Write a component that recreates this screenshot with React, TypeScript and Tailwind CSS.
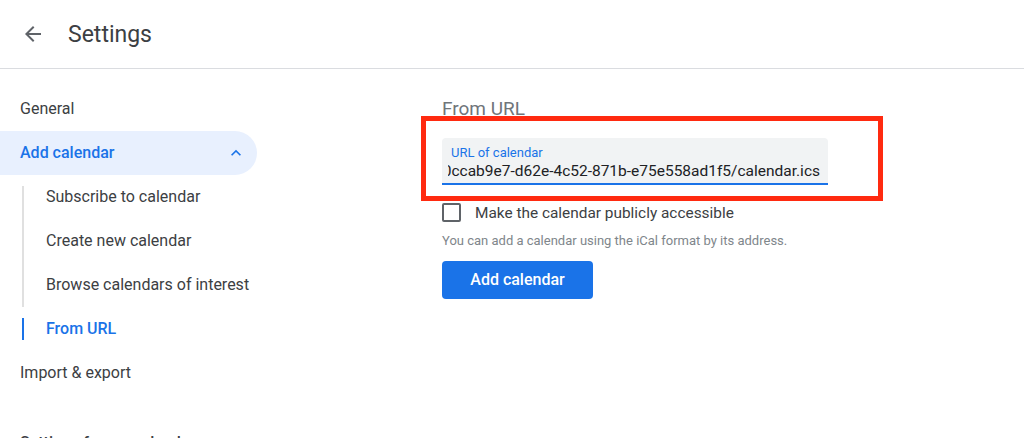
import React from "react";

const subItems = [
  { label: "Subscribe to calendar", active: false },
  { label: "Create new calendar", active: false },
  { label: "Browse calendars of interest", active: false },
  { label: "From URL", active: true },
];

function BackArrow() {
  return (
    <svg width="24" height="24" viewBox="0 0 24 24" fill="#5f6368">
      <path d="M20 11H7.83l5.59-5.59L12 4l-8 8 8 8 1.41-1.41L7.83 13H20v-2z" />
    </svg>
  );
}

function ChevronUp() {
  return (
    <svg width="20" height="20" viewBox="0 0 24 24" fill="#1a73e8">
      <path d="M7.41 15.41 12 10.83l4.59 4.58L18 14l-6-6-6 6z" />
    </svg>
  );
}

export default function App() {
  return (
    <div className="w-[1024px] h-[438px] overflow-hidden bg-white font-['Roboto',sans-serif] text-[#3c4043]">
      {/* top bar */}
      <header className="h-[69px] flex items-center border-b border-[#dadce0]">
        <div className="pl-[21px] pr-[23px] flex items-center">
          <BackArrow />
        </div>
        <h1 className="text-[23px] leading-none text-[#3c4043]">Settings</h1>
      </header>

      <div className="flex">
        {/* sidebar */}
        <nav className="w-[257px] shrink-0 pt-[18px] text-[16px]">
          <div className="h-[44px] flex items-center pl-5">General</div>
          <div className="h-[44px] flex items-center justify-between pl-5 pr-[11px] rounded-r-full bg-[#e8f0fe] text-[#1a73e8] font-medium">
            <span>Add calendar</span>
            <ChevronUp />
          </div>
          <ul className="pl-[22px]">
            {subItems.map((item, index) => (
              <li key={index} className="h-[44px] flex">
                {item.active ? (
                  <div className="w-[2px] h-[22px] self-center bg-[#1a73e8]" />
                ) : (
                  <div
                    className={
                      index === 0
                        ? "w-[2px] mt-[11px] bg-[#e0e0e0]"
                        : "w-[2px] bg-[#e0e0e0]"
                    }
                  />
                )}
                <span
                  className={
                    item.active
                      ? "pl-[22px] self-center text-[#1a73e8] font-medium"
                      : "pl-[22px] self-center"
                  }
                >
                  {item.label}
                </span>
              </li>
            ))}
          </ul>
          <div className="h-[44px] flex items-center pl-5">Import &amp; export</div>
          <div className="mt-[38px] pl-5 font-medium leading-[20px]">Settings for my calendars</div>
        </nav>

        {/* main */}
        <main className="pl-[185px] pt-[28px]">
          <h2 className="text-[19px] leading-[24px] text-[#70757a]">From URL</h2>
          <div className="ml-[-21px] mt-[-5px] w-[462px] border-[5px] border-[#ff2a10] pt-[17px] pl-4 pb-[11px]">
            <div className="w-[386px] h-[47px] bg-[#f1f3f4] rounded-t-[4px] border-b-2 border-[#1a73e8] pt-[7px]">
              <div className="pl-[9px] text-[13px] leading-[16px] text-[#1a73e8]">URL of calendar</div>
              <div className="ml-[6px] mr-2 flex justify-end overflow-hidden whitespace-nowrap text-[15.5px] leading-[20px] text-[#202124]">
                https://example.com/calendars/0ccab9e7-d62e-4c52-871b-e75e558ad1f5/calendar.ics
              </div>
            </div>
          </div>
          <label className="mt-[2px] flex items-center gap-[14px] text-[15.4px] leading-[18px]">
            <span className="w-[19px] h-[19px] border-2 border-[#5f6368] rounded-[2px]" />
            <span>Make the calendar publicly accessible</span>
          </label>
          <p className="mt-[11px] text-[13px] leading-[16px] text-[#80868b]">
            You can add a calendar using the iCal format by its address.
          </p>
          <button className="mt-[12px] w-[151px] h-[38px] rounded-[4px] bg-[#1a73e8] text-white text-[16px] font-medium">
            Add calendar
          </button>
        </main>
      </div>
    </div>
  );
}
